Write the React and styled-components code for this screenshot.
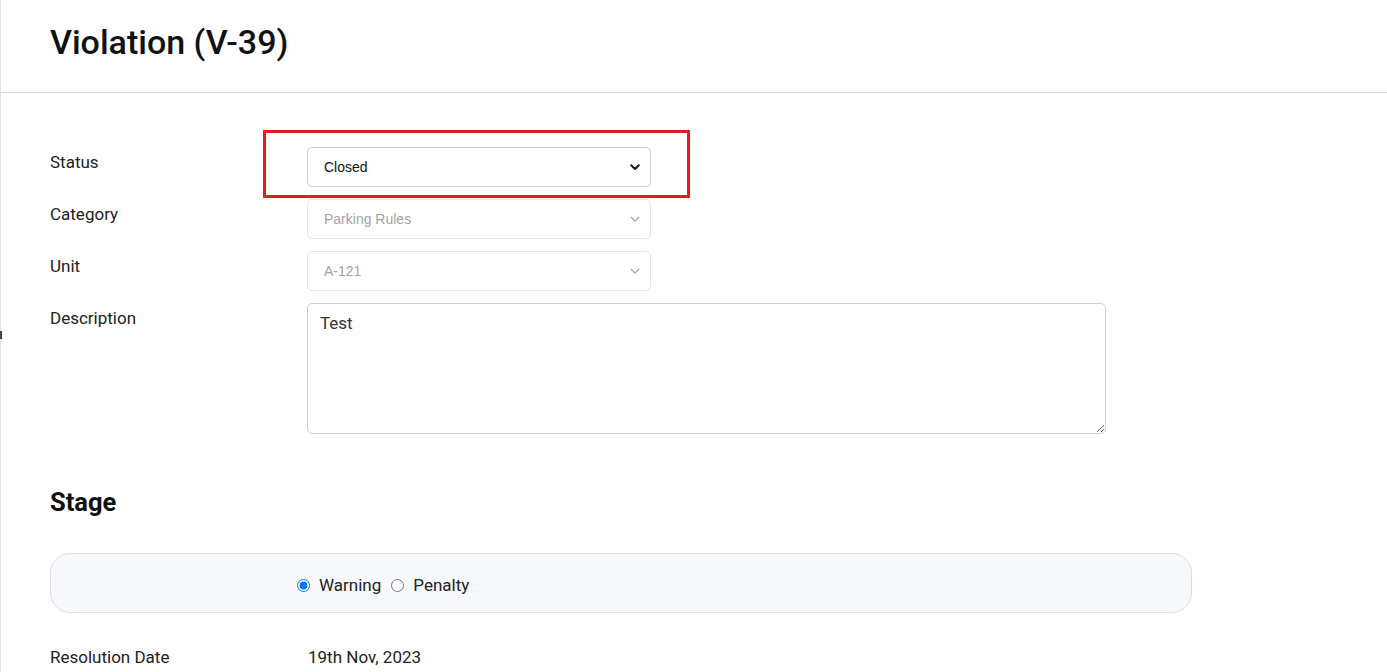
import React from "react";
import styled, { createGlobalStyle } from "styled-components";

const Global = createGlobalStyle`
  html, body {
    margin: 0;
    padding: 0;
    background: #ffffff;
    font-family: Roboto, "Liberation Sans", Arial, sans-serif;
    color: #212529;
  }
  * { box-sizing: border-box; }
`;

function Chevron({ muted }) {
  return (
    <svg width="10" height="7" viewBox="0 0 10 7">
      <path
        d="M1.2 1.3 L5 5 L8.8 1.3"
        fill="none"
        stroke={muted ? "#a8a8a8" : "#1a1a1a"}
        strokeWidth={muted ? "1.3" : "2"}
        strokeLinecap="round"
        strokeLinejoin="round"
      />
    </svg>
  );
}

function Violation() {
  return (
    <Page>
      <Handle />
      <Header>
        <Title>Violation (V-39)</Title>
      </Header>
      <Body>
        <Form>
          <Label>Status</Label>
          <Field>
            <Highlight />
            <Select>
              <span>Closed</span>
              <Arrow>
                <Chevron />
              </Arrow>
            </Select>
          </Field>

          <Label>Category</Label>
          <Field>
            <Select $disabled>
              <span>Parking Rules</span>
              <Arrow>
                <Chevron muted />
              </Arrow>
            </Select>
          </Field>

          <Label>Unit</Label>
          <Field>
            <Select $disabled>
              <span>A-121</span>
              <Arrow>
                <Chevron muted />
              </Arrow>
            </Select>
          </Field>

          <Label>Description</Label>
          <TextArea defaultValue="Test" />
        </Form>

        <SectionTitle>Stage</SectionTitle>

        <StageBox>
          <RadioGroup>
            <RadioItem>
              <Radio type="radio" name="stage" defaultChecked />
              Warning
            </RadioItem>
            <RadioItem>
              <Radio type="radio" name="stage" />
              Penalty
            </RadioItem>
          </RadioGroup>
        </StageBox>

        <InfoRow>
          <InfoLabel>Resolution Date</InfoLabel>
          <InfoValue>19th Nov, 2023</InfoValue>
        </InfoRow>
      </Body>
    </Page>
  );
}

const Page = styled.div`
  position: relative;
  min-height: 672px;
  border-left: 1px solid #e2e2e2;
`;

const Handle = styled.div`
  position: absolute;
  left: -1px;
  top: 331px;
  width: 2px;
  height: 8px;
  background: #444;
`;

const Header = styled.div`
  height: 93px;
  padding: 22px 0 0 49px;
  border-bottom: 1px solid #dcdcdc;
`;

const Title = styled.h1`
  margin: 0;
  font-size: 34px;
  font-weight: 500;
  line-height: 41px;
  color: #111;
`;

const Body = styled.div`
  padding: 54px 0 0 49px;
`;

const Form = styled.div`
  display: grid;
  grid-template-columns: 257px 799px;
  row-gap: 12px;
  align-items: start;
`;

const Label = styled.div`
  font-size: 17px;
  line-height: 20px;
  padding-top: 5px;
  color: #222;
`;

const Field = styled.div`
  position: relative;
  width: 344px;
`;

const Highlight = styled.div`
  position: absolute;
  top: -17px;
  left: -44px;
  right: -39px;
  bottom: -11px;
  border: 3px solid #e31b23;
  pointer-events: none;
`;

const Select = styled.div`
  display: flex;
  align-items: center;
  justify-content: space-between;
  height: 40px;
  padding: 0 10px 0 16px;
  border: 1px solid ${(p) => (p.$disabled ? "#e6e6e6" : "#cfcfcf")};
  border-radius: 5px;
  background: #fff;
  font-family: "Liberation Sans", Arial, sans-serif;
  font-size: 14px;
  color: ${(p) => (p.$disabled ? "#a3a3a3" : "#111")};
`;

const Arrow = styled.span`
  display: flex;
  align-items: center;
`;

const TextArea = styled.textarea`
  width: 799px;
  height: 131px;
  padding: 9px 12px;
  border: 1px solid #cfcfcf;
  border-radius: 5px;
  font-family: Roboto, "Liberation Sans", Arial, sans-serif;
  font-size: 17px;
  line-height: 20px;
  color: #333;
  resize: vertical;
  outline: none;
`;

const SectionTitle = styled.h2`
  margin: 54px 0 0 0;
  font-size: 25.5px;
  font-weight: 700;
  line-height: 28px;
  color: #111;
`;

const StageBox = styled.div`
  margin-top: 37px;
  width: 1142px;
  height: 60px;
  border: 1px solid #dedede;
  border-radius: 20px;
  background: #f7f8fc;
  display: flex;
  align-items: center;
  padding: 4px 0 0 246px;
`;

const RadioGroup = styled.div`
  display: flex;
  align-items: center;
  gap: 10px;
`;

const RadioItem = styled.label`
  display: flex;
  align-items: center;
  gap: 9px;
  font-size: 17px;
  color: #222;
`;

const Radio = styled.input`
  margin: 0;
  width: 13px;
  height: 13px;
  accent-color: #0b75f5;
`;

const InfoRow = styled.div`
  display: flex;
  margin-top: 34px;
  font-size: 17px;
  line-height: 20px;
  color: #222;
`;

const InfoLabel = styled.div`
  width: 258px;
`;

const InfoValue = styled.div``;

export default function App() {
  return (
    <>
      <Global />
      <Violation />
    </>
  );
}
